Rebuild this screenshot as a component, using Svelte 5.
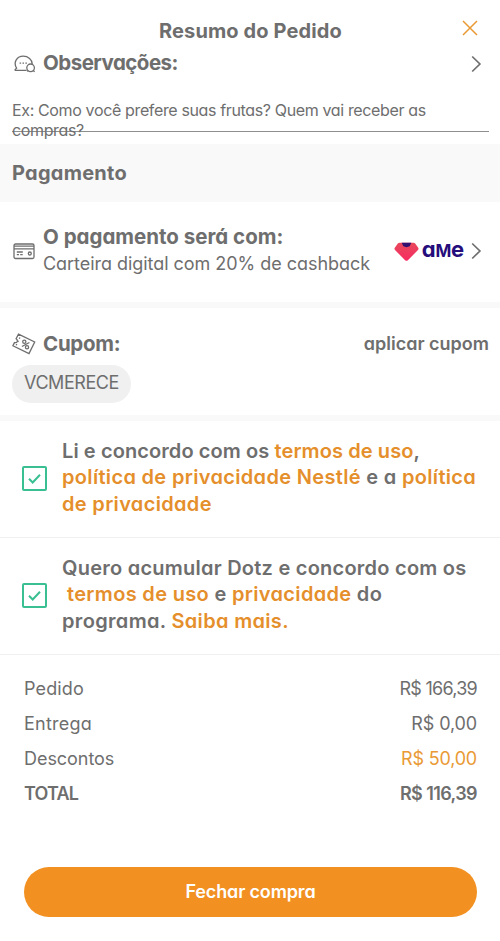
<script>
  const totals = [
    { label: 'Pedido', value: 'R$ 166,39', kind: 'subtotal' },
    { label: 'Entrega', value: 'R$ 0,00', kind: 'shipping' },
    { label: 'Descontos', value: 'R$ 50,00', kind: 'discount' },
    { label: 'TOTAL', value: 'R$ 116,39', kind: 'total' }
  ];
</script>

{#snippet chevron()}
  <svg class="chevron" width="11" height="18" viewBox="0 0 11 18"><path d="M1.200 1.500 8.900 9l-7.700 7.500" /></svg>
{/snippet}

{#snippet checkbox()}
  <svg class="check" width="25" height="25" viewBox="0 0 25 25">
    <rect x="1" y="1" width="23" height="23" rx="1" />
    <path d="m7 12.700 3.700 3.800L18 8.800" />
  </svg>
{/snippet}

<main>
  <header>
    <h1>Resumo do Pedido</h1>
    <button class="close" aria-label="Fechar">
      <svg width="16" height="16" viewBox="0 0 16 16"><path d="m1 1 14 14M15 1 1 15" /></svg>
    </button>
  </header>

  <section class="notes">
    <div class="heading">
      <svg class="icon" width="22" height="18" viewBox="0 0 22 18">
        <path d="M12.600 15.400H1.800c-.8 0-.9-.7-.4-1.100l1.200-1.200C-1.200 7 3.200 1.100 9.200 1.100c5 0 9 3.500 9 7.800M5.600 8.200h1.500M8.500 8.200h1.500M11.400 8.200h1.500" />
        <circle cx="16.600" cy="12.800" r="3.800" />
        <path d="m13.300 16.500.7-1M19.300 15.500l1.300 1.200" />
      </svg>
      <h2 class="notes-title">Observações:</h2>
      {@render chevron()}
    </div>
    <div class="field">
      <p>Ex: Como você prefere suas frutas? Quem vai receber as</p>
      <p>compras?</p>
    </div>
  </section>

  <h2 class="band">Pagamento</h2>

  <section class="payment">
    <svg class="icon" width="22" height="17" viewBox="0 0 22 17">
      <rect x="1" y="1" width="20" height="14.500" rx="1.500" />
      <path d="M1 3.200h20M1 5.800h20M3.800 9h6M3.800 11.700h2.200M7.200 11.700h2.500" />
      <circle cx="16.800" cy="10.500" r="1.500" />
    </svg>
    <div class="method">
      <h2>O pagamento será com:</h2>
      <p>Carteira digital com 20% de cashback</p>
    </div>
    <svg class="gem" width="25" height="20" viewBox="0 0 25 20">
      <defs>
        <linearGradient id="gem" x1="0" y1="0" x2="0" y2="1">
          <stop offset="0" stop-color="#e8495c" />
          <stop offset="1" stop-color="#f72b62" />
        </linearGradient>
      </defs>
      <path fill="url(#gem)" d="M5.500.800h14q1 0 1.700.8l3 4.200q.8 1.200-.2 2.200L13.900 18.200q-1.400 1.200-2.800 0L1 8q-1-1-.2-2.200l3-4.200q.7-.8 1.700-.8Z" />
      <path fill="#31106f" d="M7.700.800h9.600l-1.600 3.400-3.200 1-3.200-1Z" />
    </svg>
    <span class="ame">a<span>M</span>e</span>
    {@render chevron()}
  </section>

  <section class="coupon">
    <div class="heading">
      <svg class="icon" width="24" height="22" viewBox="0 0 24 22">
        <path d="M6.500 1.200 22.700 9 17 20.600.900 12.800l1.600-3.200q2.200.4 2.800-1.200t-1.200-2.700ZM7.900 4.500l-.6 1.200M6.400 7.700l-.7 1.200M4.800 11l-.6 1.200M17.400 9.500 9.900 13.500" />
        <circle cx="12.300" cy="8.800" r="1.600" />
        <circle cx="15" cy="14.200" r="1.600" />
      </svg>
      <h2>Cupom:</h2>
      <button class="apply">aplicar cupom</button>
    </div>
    <span class="chip">VCMERECE</span>
  </section>

  <section class="consent">
    {@render checkbox()}
    <p>
      <span class="l1">Li e concordo com os <a href="#termos">termos de uso</a>,</span>
      <span><a href="#nestle">política de privacidade Nestlé</a> e a <a href="#privacidade">política</a></span>
      <span><a href="#privacidade">de privacidade</a></span>
    </p>
  </section>

  <section class="consent">
    {@render checkbox()}
    <p>
      <span class="l2">Quero acumular Dotz e concordo com os</span>
      <span class="indent"><a href="#termos">termos de uso</a> e <a href="#privacidade">privacidade</a> do</span>
      <span>programa. <a href="#saiba">Saiba mais.</a></span>
    </p>
  </section>

  <dl>
    {#each totals as row}
      <div class={row.kind}>
        <dt>{row.label}</dt>
        <dd>{row.value}</dd>
      </div>
    {/each}
  </dl>

  <button class="submit">Fechar compra</button>
</main>

<style>
  :global(body) { margin: 0; background: #fff; }
  main {
    box-sizing: border-box;
    width: 500px;
    height: 941px;
    overflow: hidden;
    background: #fff;
    color: #6e6e6e;
    font-family: Inter, "Open Sans", sans-serif;
    font-feature-settings: "cv11";
    font-size: 18px;
    white-space: nowrap;
  }
  h1, h2, p, dl, dd { margin: 0; }
  button { padding: 0; border: 0; background: none; color: inherit; font: inherit; font-feature-settings: inherit; }
  svg { flex: none; display: block; fill: none; }
  h1 { font-size: 20px; line-height: 24px; font-weight: 700; letter-spacing: .13px; }
  h2 { font-size: 20.5px; line-height: 26px; font-weight: 700; }

  header { display: flex; align-items: flex-start; height: 46px; padding: 19px 22px 0 159px; box-sizing: border-box; }
  .close { margin-left: auto; margin-top: 1px; }
  .close path { stroke: #e99a35; stroke-width: 1.500; }
  .chevron { margin-left: auto; }
  .chevron path { stroke: #6e6e6e; stroke-width: 1.700; }
  .icon { stroke: #6e6e6e; stroke-width: 1.300; }

  .notes { height: 98px; padding: 0 11px 0 12px; box-sizing: border-box; }
  .heading { display: flex; align-items: center; }
  .notes .heading { height: 36px; padding: 0 7px 0 2px; }
  .notes-title { margin: -2px 0 0 7px; letter-spacing: -.52px; }
  .field { height: 39px; margin-top: 11px; padding-top: 8px; border-bottom: 1px solid #8f8f8f; box-sizing: border-box; font-size: 16px; line-height: 19.500px; }
  .field p { letter-spacing: -.36px; }

  .band { height: 58px; box-sizing: border-box; padding-left: 12px; background: #f9f9f9; font-size: 20px; line-height: 59px; letter-spacing: .26px; }

  .payment { display: flex; align-items: center; height: 100px; padding: 0 18px 2px 13px; box-sizing: border-box; }
  .method { margin: 0 0 0 8px; }
  .method p { line-height: 28px; letter-spacing: -.04px; }
  .gem { margin-left: auto; margin-top: 2px; }
  .ame { margin: -2px 0 0 3px; color: #250d7c; font-size: 22px; font-weight: 700; line-height: 26px; letter-spacing: -.2px; }
  .ame span { font-size: 17px; letter-spacing: -.2px; }
  .payment .chevron { margin-left: 7px; }

  .coupon { height: 119px; padding: 21px 11px 0 12px; border-top: 6px solid #f9f9f9; border-bottom: 6px solid #f9f9f9; box-sizing: border-box; }
  .coupon .heading { height: 29px; }
  .coupon h2 { margin-left: 7px; letter-spacing: -.28px; }
  .apply { margin-left: auto; font-weight: 600; }
  .chip { display: inline-block; height: 38px; margin-top: 7px; padding: 0 12px; border-radius: 19px; background: #f0f0f0; line-height: 36px; letter-spacing: -.43px; }

  .consent { display: flex; align-items: center; height: 117px; padding: 0 0 2px 22px; border-bottom: 1px solid #f0f0f0; box-sizing: border-box; }
  .consent p { margin: -1px 0 0 15px; font-size: 20px; font-weight: 600; line-height: 26.500px; letter-spacing: .33px; }
  .consent p span { display: block; }
  .consent .l1 { letter-spacing: .09px; }
  .consent .l2 { letter-spacing: .24px; }
  .indent { padding-left: 5px; }
  a { color: #e58f2c; text-decoration: none; }
  .check rect, .check path { stroke: #39bf91; stroke-width: 2; }

  dl { padding: 16px 23px 0 24px; }
  dl div { display: flex; justify-content: space-between; height: 35px; line-height: 35px; }
  .subtotal dt { letter-spacing: .15px; }
  .subtotal dd { letter-spacing: -.75px; }
  .shipping dt { letter-spacing: .23px; }
  .shipping dd { letter-spacing: -.12px; }
  .discount dt { letter-spacing: -.05px; }
  .discount dd { color: #e99a35; letter-spacing: -.2px; }
  .total { font-weight: 600; }
  .total dt { letter-spacing: -.84px; }
  .total dd { letter-spacing: -.6px; }

  .submit { display: block; width: 453px; height: 50px; margin: 56px 0 0 24px; border-radius: 25px; background: #f29021; color: #fff; font-weight: 600; line-height: 48px; letter-spacing: -.15px; }
</style>
